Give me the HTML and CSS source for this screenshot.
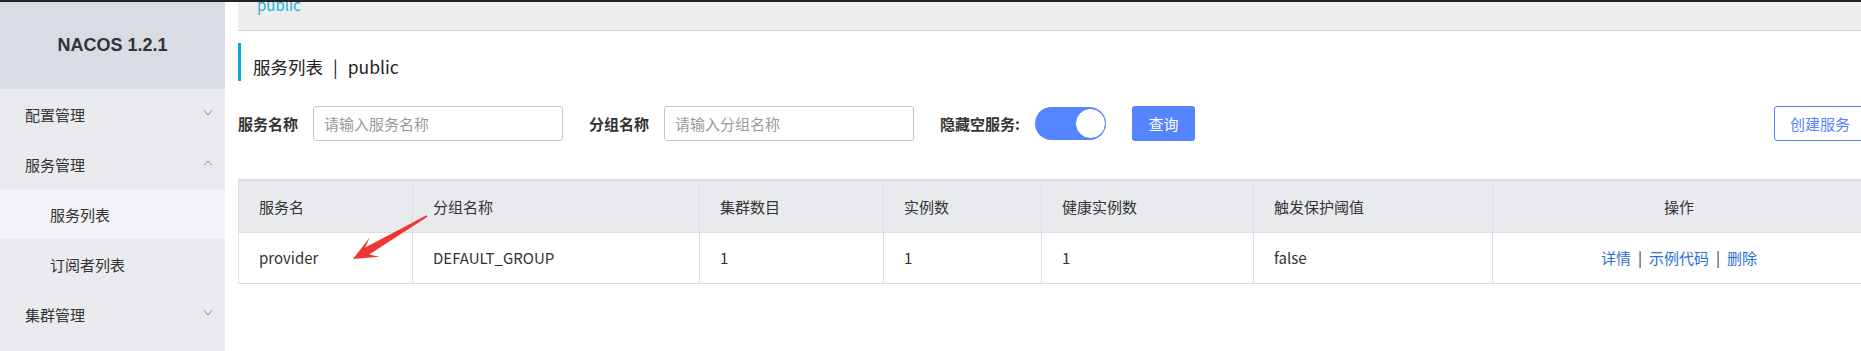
FILE: index.html
```html
<!DOCTYPE html>
<html lang="zh-CN">
<head>
  <meta charset="UTF-8">
  <title>服务列表</title>
  <link rel="stylesheet" href="styles.css">
</head>
<body>
  <div class="topline"></div>
  <div class="layout">
    <aside class="sidebar">
      <div class="brand">NACOS 1.2.1</div>
      <ul class="menu">
        <li class="menu-item">配置管理
          <svg class="chevron" width="10" height="6" viewBox="0 0 10 6"><path d="M1 0.5 L5 5 L9 0.5" /></svg>
        </li>
        <li class="menu-item">服务管理
          <svg class="chevron" width="10" height="6" viewBox="0 0 10 6"><path d="M1 5.5 L5 1 L9 5.5" /></svg>
        </li>
        <li class="menu-item sub active">服务列表</li>
        <li class="menu-item sub">订阅者列表</li>
        <li class="menu-item">集群管理
          <svg class="chevron" width="10" height="6" viewBox="0 0 10 6"><path d="M1 0.5 L5 5 L9 0.5" /></svg>
        </li>
      </ul>
    </aside>

    <main class="main">
      <div class="ns-bar"><span class="ns-link">public</span></div>

      <h2 class="page-title">服务列表<span class="title-sep">|</span>public</h2>

      <div class="filter">
        <label class="filter-label">服务名称</label>
        <input class="filter-input" type="text" placeholder="请输入服务名称">
        <label class="filter-label">分组名称</label>
        <input class="filter-input" type="text" placeholder="请输入分组名称">
        <label class="filter-label">隐藏空服务:</label>
        <div class="switch"><span class="knob"></span></div>
        <button class="btn-primary">查询</button>
        <button class="btn-outline">创建服务</button>
      </div>

      <table class="svc-table">
        <colgroup>
          <col class="c-name">
          <col class="c-group">
          <col class="c-cluster">
          <col class="c-inst">
          <col class="c-healthy">
          <col class="c-threshold">
          <col class="c-ops">
        </colgroup>
        <thead>
          <tr>
            <th>服务名</th>
            <th>分组名称</th>
            <th>集群数目</th>
            <th>实例数</th>
            <th>健康实例数</th>
            <th>触发保护阈值</th>
            <th class="ops">操作</th>
          </tr>
        </thead>
        <tbody>
          <tr>
            <td>provider</td>
            <td>DEFAULT_GROUP</td>
            <td>1</td>
            <td>1</td>
            <td>1</td>
            <td>false</td>
            <td class="ops">
              <a href="#">详情</a><span class="op-sep">|</span><a href="#">示例代码</a><span class="op-sep">|</span><a href="#">删除</a>
            </td>
          </tr>
        </tbody>
      </table>
    </main>
  </div>

  <!-- 标注箭头 -->
  <svg class="mark-arrow" width="1861" height="351" viewBox="0 0 1861 351">
    <polygon points="427.5,216.8 369.2,254.5 379.5,256.8 353,259 369.6,237.4 365.2,247.6 426.5,215.2" />
  </svg>
</body>
</html>
```

FILE: styles.css
```css
* {
  box-sizing: border-box;
}
body {
  margin: 0;
  width: 1861px;
  height: 351px;
  overflow: hidden;
  position: relative;
  font-family: "Noto Sans CJK SC", sans-serif;
  font-size: 15px;
  color: #333;
  background-color: #fff;
}
.topline {
  height: 2px;
  background-color: #222;
}
.layout {
  display: flex;
  height: 349px;
}

/* 左侧菜单 */
.sidebar {
  width: 225px;
  flex-shrink: 0;
  background-color: #e9ebef;
}
.brand {
  height: 87px;
  display: flex;
  align-items: center;
  justify-content: center;
  background-color: #d8dce3;
  font-family: "Liberation Sans", sans-serif;
  font-size: 18px;
  font-weight: bold;
  color: #333;
}
.menu {
  list-style: none;
  margin: 0;
  padding: 0;
}
.menu-item {
  height: 50px;
  display: flex;
  align-items: center;
  justify-content: space-between;
  padding: 0 12px 0 25px;
  color: #333;
}
.menu-item.sub {
  padding-left: 50px;
}
.menu-item.active {
  background-color: #f2f3f6;
}
.chevron {
  margin-top: -2px;
}
.chevron path {
  fill: none;
  stroke: #8a8a8a;
  stroke-width: 1;
}

/* 主区域 */
.main {
  width: 1641px;
  flex-shrink: 0;
  padding-left: 13px;
}
.ns-bar {
  height: 29px;
  padding-left: 19px;
  background-color: #eee;
  border-bottom: 1px solid #ccc;
  overflow: hidden;
}
.ns-link {
  display: block;
  margin-top: -5px;
  line-height: 15px;
  color: #1fb1d9;
}
.page-title {
  margin: 12px 0 0;
  height: 38px;
  padding: 10px 0 0 12px;
  border-left: 3px solid #0aa3d9;
  font-size: 17.5px;
  font-weight: normal;
  line-height: 28px;
  color: #222;
}
.title-sep {
  margin: 0 10px;
}

.filter {
  display: flex;
  align-items: center;
  height: 35px;
  margin-top: 25px;
}
.filter-label {
  margin-right: 15px;
  font-weight: bold;
  color: #333;
}
.filter-input {
  width: 250px;
  height: 35px;
  margin-right: 26px;
  padding: 0 10px;
  border: 1px solid #c4c6cf;
  border-radius: 3px;
  font-family: inherit;
  font-size: 15px;
  color: #333;
  outline: none;
}
.filter-input::placeholder {
  color: #999;
}
.switch {
  width: 71px;
  height: 33px;
  margin-right: 26px;
  padding: 1px 0;
  display: flex;
  justify-content: flex-end;
  border-radius: 17px;
  background-color: #5584ff;
}
.knob {
  width: 31px;
  height: 31px;
  border-radius: 50%;
  border: 1px solid #5584ff;
  background-color: #fff;
}
.btn-primary {
  width: 63px;
  height: 35px;
  border: none;
  border-radius: 3px;
  background-color: #5584ff;
  color: #fff;
  font-family: inherit;
  font-size: 15px;
}
.btn-outline {
  margin-left: auto;
  height: 35px;
  padding: 0 15px;
  border: 1px solid #5584ff;
  border-radius: 3px;
  background-color: #fff;
  color: #5584ff;
  font-family: inherit;
  font-size: 15px;
}

/* 服务表格 */
.svc-table {
  width: 100%;
  margin-top: 38px;
  border-collapse: collapse;
  table-layout: fixed;
  border-top: 2px solid #dcdee3;
}
.c-name { width: 174px; }
.c-group { width: 287px; }
.c-cluster { width: 184px; }
.c-inst { width: 158px; }
.c-healthy { width: 212px; }
.c-threshold { width: 239px; }
th,
td {
  padding: 0 20px;
  border: 1px solid #dcdee3;
  text-align: left;
  color: #333;
}
th {
  height: 52px;
  font-weight: normal;
  background-color: #e9eaee;
}
td {
  height: 51px;
}
th.ops,
td.ops {
  text-align: center;
}
td.ops a {
  color: #2a6fd6;
  text-decoration: none;
}
.op-sep {
  margin: 0 7px;
  color: #333;
}

.mark-arrow {
  position: absolute;
  left: 0;
  top: 0;
  pointer-events: none;
}
.mark-arrow polygon {
  fill: #f03535;
}
```
